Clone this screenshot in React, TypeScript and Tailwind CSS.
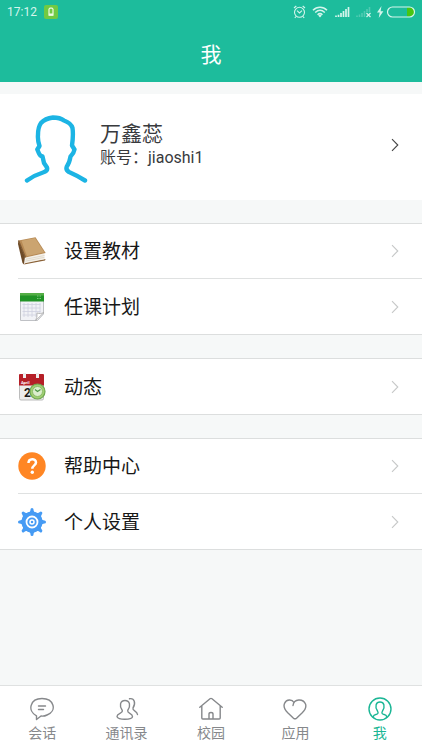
import type { ReactNode } from 'react';

function Chevron({ className }: { className: string }) {
  return (
    <svg viewBox="0 0 8 14" className={`h-[14px] w-2 ${className}`} fill="none" stroke="currentColor" strokeWidth="1.1" aria-hidden="true">
      <path d="M1 1.2 6.8 7 1 12.8" />
    </svg>
  );
}

function StatusBar() {
  return (
    <div className="flex h-6 items-center justify-between pr-[5px] pl-[7px] text-[#d5f5ec]">
      <div className="flex items-center gap-[7px]">
        <span className="text-[12px] leading-4">17:12</span>
        <svg viewBox="0 0 14 14" className="size-[14px]" aria-hidden="true">
          <rect width="14" height="14" rx="2" fill="#71ca42" />
          <path d="M5 4.2 6 3.2h2l1 1v6H5z" fill="none" stroke="#effbe5" strokeWidth="1.2" />
          <path d="M5 8.5h4v2H5z" fill="#effbe5" />
        </svg>
      </div>
      <svg viewBox="0 0 124 14" className="h-[14px] w-[124px]" fill="none" stroke="currentColor" aria-hidden="true">
        <circle cx="6.5" cy="7.3" r="5" strokeWidth="1.1" />
        <path d="m4 5.7 2.5 2.2L9 5.7M1 3l2.3-2M12 3 9.7 1M3 11.5 1.8 13M10 11.5l1.2 1.5" strokeWidth="1.1" />
        <path d="M20 5.2c4-4.1 10-4.1 14 0M22.2 7.5c3-2.8 6.6-2.8 9.6 0M24.5 9.7c1.6-1.4 3.4-1.4 5 0" strokeWidth="1.5" />
        <path d="m25.2 10.4 1.8 2 1.8-2q-1.8-1.3-3.6 0" fill="currentColor" stroke="none" />
        <path d="M43 12v-1.5M45.5 12v-2.2M48 12V8M50.5 12V6M53 12V4M55.5 12V2" strokeWidth="1.7" />
        <path d="M64 12v-1.5M66.5 12v-2.5M69 12V8M71.5 12V6M74 7V4M76.5 7V2" strokeWidth="1.6" opacity=".28" />
        <path d="m73.5 8 4 4m0-4-4 4" strokeWidth="1.2" />
        <path d="m88.5 1-4.5 6.5h2.7L85.7 13l4.7-6.8h-2.8z" fill="currentColor" stroke="none" />
        <path d="M114 2.5h3.5a4.5 4.5 0 0 1 0 9H114z" fill="#48c511" stroke="none" />
        <rect x="94.5" y="2" width="27" height="10" rx="5" strokeWidth="1.2" />
      </svg>
    </div>
  );
}

function BookIcon() {
  return (
    <svg viewBox="0 0 28 28" className="size-7" aria-hidden="true">
      <path d="M.5 3.5 7 19.500 6 27.500 4.500 26 0 7z" fill="#6d4a27" />
      <path d="M6 27.500 27 23.500l.5-1.500L8 25z" fill="#8a6136" />
      <path d="M7.500 20.500 26.500 16.500v5.700L7 26.200z" fill="#f4f0e8" />
      <path d="m7.500 22.300 19-3.800M7.300 24.200l19.200-3.900" stroke="#d3cbbb" strokeWidth=".6" />
      <path d="m.5 3.5 17-3.300L27.700 16 7.500 20.500z" fill="#b78a55" />
      <path d="m3.500 3.700 13.500-2.600 9.300 14.200-17.300 3.800z" fill="#cba470" />
      <path d="m.5 3.5 7 17" fill="none" stroke="#7d5831" strokeWidth="1.2" />
    </svg>
  );
}

function CalendarIcon() {
  return (
    <svg viewBox="0 0 28 28" className="size-7" aria-hidden="true">
      <path d="M2.5 1h23v20l-6 6.500h-17z" fill="#f1f2f6" stroke="#bfc1c5" />
      <path d="M2 0h24v8.500H2z" fill="#219326" />
      <path d="M2 0h24v2.500H2z" fill="#55ae46" />
      <path d="M19 3h5M19 5.500h5" stroke="#79c778" strokeDasharray="1.5 1" />
      <path d="M4.5 11.5h18M4.5 15h18M4.5 18.5h18M4.5 22h15M6 10v14M10 10v14M14 10v14M18 10v14M22 10v10" stroke="#cfd1e0" strokeWidth=".8" />
      <path d="M17.500 27.500q2-3 1.500-7.500 3.500 1.500 7-.5z" fill="#fff" stroke="#aaa" strokeWidth=".8" />
    </svg>
  );
}

function EventIcon() {
  return (
    <svg viewBox="0 0 28 28" className="size-7" aria-hidden="true">
      <rect x="1.5" y="8" width="24" height="19" rx="1.5" fill="#ececec" stroke="#bcbcbc" />
      <path d="M2 1h3v4h3V1h10v4h3V1h4q1 0 1 1v10.500H1V2q0-1 1-1" fill="#b51f27" />
      <path d="M5 0v5h3V0M18 0v5h3V0" fill="#eee" />
      <text x="3" y="10.5" fontSize="4" fontWeight="700" fill="#fff">April</text>
      <text x="6" y="23.5" fontSize="12" fontWeight="700" fill="#191919">2</text>
      <circle cx="19.5" cy="18.5" r="7.5" fill="#a1cf73" stroke="#6fa850" strokeWidth="1.2" />
      <circle cx="19.5" cy="18.5" r="5" fill="#dceecd" stroke="#8bbd68" />
      <path d="m17 16.5 2.500 2 3-2" fill="none" stroke="#4d9646" strokeWidth="1.2" />
    </svg>
  );
}

function HelpIcon() {
  return (
    <svg viewBox="0 0 28 28" className="size-7" aria-hidden="true">
      <circle cx="14" cy="14" r="13.7" fill="#ff8624" />
      <path d="M10.5 11c0-5 7.500-5 7.500-.5 0 2.800-3.700 3-3.700 6.200" fill="none" stroke="#fff" strokeWidth="2.5" />
      <circle cx="14.3" cy="20.3" r="1.7" fill="#fff" />
    </svg>
  );
}

const teeth = [0, 45, 90, 135, 180, 225, 270, 315];

function GearIcon() {
  return (
    <svg viewBox="0 0 28 28" className="size-7" aria-hidden="true">
      <g fill="#469bf4">
        {teeth.map((angle) => (
          <path key={angle} d="M9.5 5q3-1 3-3.500 0-1.500 1.500-1.500t1.500 1.500Q15.500 4 18.500 5z" transform={`rotate(${angle} 14 14)`} />
        ))}
        <circle cx="14" cy="14" r="10.5" />
      </g>
      <circle cx="14" cy="14" r="5.5" fill="none" stroke="#fff" strokeWidth="1.8" />
      <circle cx="14" cy="14" r="2" fill="none" stroke="#fff" strokeWidth="1.5" />
    </svg>
  );
}

function Row({ icon, label }: { icon: ReactNode; label: string }) {
  return (
    <li className="ml-[18px] h-[55px] border-b border-[#dfe1e1] last:border-b-0">
      <button type="button" className="flex h-full w-full items-center pr-[23px] text-left">
        {icon}
        <span className="ml-[18px] flex-1 pt-[2px] text-[19px] leading-6 text-[#171717]">{label}</span>
        <Chevron className="text-[#c6c8c8]" />
      </button>
    </li>
  );
}

function Group({ children }: { children: ReactNode }) {
  return <ul className="border-y border-[#dcdede] bg-white">{children}</ul>;
}

function NavItem({ label, active = false, children }: { label: string; active?: boolean; children: ReactNode }) {
  return (
    <a href="#" aria-current={active ? 'page' : undefined} className={`flex flex-1 flex-col items-center pt-[11px] ${active ? 'text-[#1bb695]' : 'text-[#86888b]'}`}>
      <svg viewBox="0 0 24 24" className="size-6" fill="none" stroke="currentColor" strokeWidth="1.4" strokeLinecap="round" strokeLinejoin="round" aria-hidden="true">
        {children}
      </svg>
      <span className="mt-[2px] text-[14px] leading-5">{label}</span>
    </a>
  );
}

export default function App() {
  return (
    <div className="flex min-h-screen flex-col bg-[#f6f8f8] font-[Roboto,'Noto_Sans_CJK_SC',sans-serif]">
      <header className="bg-[#1dbc9c]">
        <StatusBar />
        <h1 className="pt-[17px] pb-[13px] text-center text-[21px] leading-7 text-white">我</h1>
      </header>

      <main className="flex flex-1 flex-col gap-[23px] pt-3">
        <button type="button" className="flex h-[106px] w-full items-center bg-white pr-[23px] pb-1 pl-6 text-left text-[#383a3d]">
          <svg viewBox="0 0 64 72" className="mt-3 h-[72px] w-16" fill="none" stroke="#1cb4e4" strokeWidth="4.4" strokeLinecap="round" strokeLinejoin="round" aria-hidden="true">
            <path d="M3 65.5C8 62 14 59 19 57.500Q24 56 23 52.500L20 48 18.500 41.500Q16 41 15 38.500L13.300 34.500 15.500 31Q13.500 25 14 20 14 12 17 8 21 3.500 29 2.500 36 2.500 40 5.500 47 8 48.500 13 49.500 20 48 30.500L50.500 34.500Q50 38 46.500 41.500 45.500 48 42.800 51.500 41.500 55 45 57 52 60 61 65.500" />
          </svg>
          <span className="ml-3 flex flex-1 flex-col">
            <span className="text-[21px] leading-[26px]">万鑫蕊</span>
            <span className="text-[16px] leading-[22px]">账号：jiaoshi1</span>
          </span>
          <Chevron className="text-[#444]" />
        </button>

        <Group>
          <Row icon={<BookIcon />} label="设置教材" />
          <Row icon={<CalendarIcon />} label="任课计划" />
        </Group>
        <Group>
          <Row icon={<EventIcon />} label="动态" />
        </Group>
        <Group>
          <Row icon={<HelpIcon />} label="帮助中心" />
          <Row icon={<GearIcon />} label="个人设置" />
        </Group>
      </main>

      <nav className="flex h-[65px] border-t border-[#dfe1e1] bg-white">
        <NavItem label="会话">
          <path d="M6.5 18.8C-3 14 0 1.5 12 1.500s15.500 12.500 5 16.500q-3 1.500-6 1l-4.500 3.500z" />
          <path d="M8.5 9h7M8.5 12.5h5" />
        </NavItem>
        <NavItem label="通讯录">
          <path d="M7.3 13.5C4 9 5 3.500 10 3.500s6 5.500 2.700 10c-.7 3 4.800 2.500 4.800 6 0 3.700-15.500 3.700-15.500 0 0-3.500 6-3 5.300-6zM14.500 1.800c5-1 6.500 4.700 3.500 9.200-1 3 4 2.500 4.500 6.500" />
        </NavItem>
        <NavItem label="校园">
          <path d="m.8 10.2 10.200-8.500q1-.7 2 0l10.200 8.500M2.800 9v12q0 1 1 1h16.400q1 0 1-1V9M10 22v-5q0-1.500 2-1.500t2 1.500v5" />
        </NavItem>
        <NavItem label="应用">
          <path d="M10 8.500c1-7 10-7 12.500-1.500 1.500 4-1.500 7-3.500 9l-5.500 5.200q-1.500 1.300-3 0L5 16c-3-3-5-6-3.500-9.500C3.500 2 9 2 11 5.500" />
        </NavItem>
        <NavItem label="我" active>
          <circle cx="12" cy="12" r="11" />
          <path d="M5 20q.5-2 3.500-2.700 2.500-.7 1-3.300C6.500 9.500 8 5 12 5s5.500 4.500 2.500 9q-1.500 2.600 1 3.300Q18.500 18 19 20" />
        </NavItem>
      </nav>
    </div>
  );
}
